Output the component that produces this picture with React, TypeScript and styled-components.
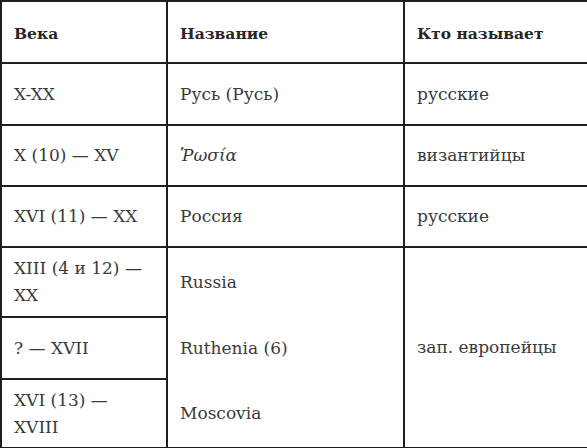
import styled, { createGlobalStyle } from "styled-components";

const GlobalStyle = createGlobalStyle`
  html, body {
    margin: 0;
    padding: 0;
    background: #ffffff;
  }
`;

const Table = styled.table`
  width: 587px;
  border-collapse: collapse;
  table-layout: fixed;
  font-family: "DejaVu Serif", "Liberation Serif", "Times New Roman", serif;
  font-size: 17px;
  line-height: 27px;
  color: #3a3a3a;
`;

const Col = styled.col<{ $w: number }>`
  width: ${(p) => p.$w}px;
`;

const Row = styled.tr<{ $h: number }>`
  height: ${(p) => p.$h}px;
`;

const HeadCell = styled.th`
  border: 2px solid #1e1e1e;
  padding: 2px 12px 0;
  text-align: left;
  vertical-align: middle;
  font-size: 15.5px;
  font-weight: 700;
  color: #262626;
`;

const Cell = styled.td<{ $open?: "top" | "bottom" | "both" }>`
  border: 2px solid #1e1e1e;
  padding: 0 12px;
  text-align: left;
  vertical-align: middle;
  ${(p) =>
    p.$open === "top" || p.$open === "both" ? "border-top: none;" : ""}
  ${(p) =>
    p.$open === "bottom" || p.$open === "both" ? "border-bottom: none;" : ""}
`;

const Greek = styled.span`
  font-style: italic;
`;

const rows = [
  { h: 62, age: "X-XX", name: "Русь (Русь)", who: "русские" },
  { h: 61, age: "X (10) — XV", name: <Greek>Ῥωσία</Greek>, who: "византийцы" },
  { h: 61, age: "XVI (11) — XX", name: "Россия", who: "русские" },
];

export default function App() {
  return (
    <>
      <GlobalStyle />
      <Table>
        <colgroup>
          <Col $w={166} />
          <Col $w={237} />
          <Col $w={184} />
        </colgroup>
        <thead>
          <Row $h={62}>
            <HeadCell>Века</HeadCell>
            <HeadCell>Название</HeadCell>
            <HeadCell>Кто называет</HeadCell>
          </Row>
        </thead>
        <tbody>
          {rows.map((r, i) => (
            <Row $h={r.h} key={i}>
              <Cell>{r.age}</Cell>
              <Cell>{r.name}</Cell>
              <Cell>{r.who}</Cell>
            </Row>
          ))}
          <Row $h={70}>
            <Cell>XIII (4 и 12) — XX</Cell>
            <Cell $open="bottom">Russia</Cell>
            <Cell rowSpan={3}>зап. европейцы</Cell>
          </Row>
          <Row $h={62}>
            <Cell>? — XVII</Cell>
            <Cell $open="both">Ruthenia (6)</Cell>
          </Row>
          <Row $h={69}>
            <Cell>XVI (13) — XVIII</Cell>
            <Cell $open="top">Moscovia</Cell>
          </Row>
        </tbody>
      </Table>
    </>
  );
}
